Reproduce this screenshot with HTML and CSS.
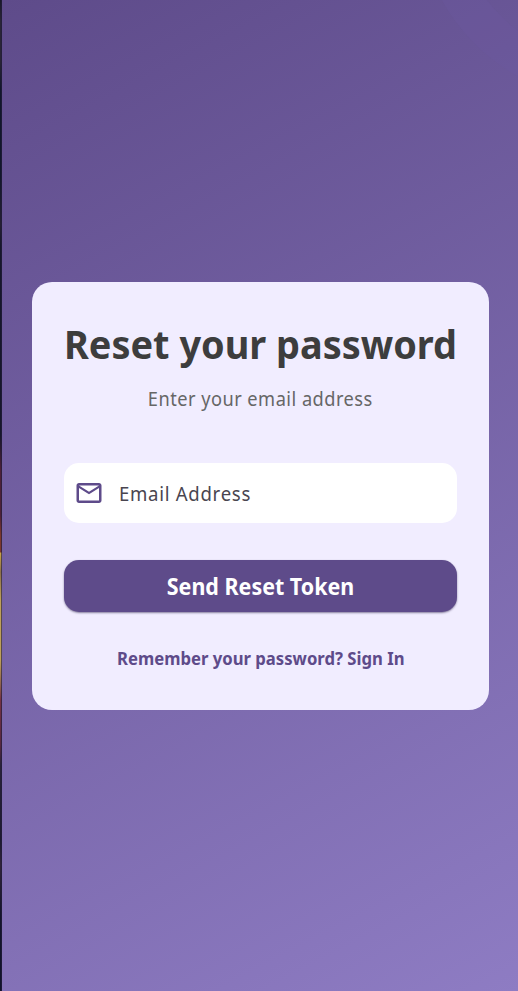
FILE: index.html
```html
<!DOCTYPE html>
<html lang="en">
<head>
<meta charset="utf-8">
<title>Reset your password</title>
<link rel="stylesheet" href="styles.css">
</head>
<body>
<div class="edge"></div>
<main class="page">
  <div class="ring"></div>
  <form class="card">
    <h1 class="title"><span>Reset your password</span></h1>
    <p class="subtitle"><span>Enter your email address</span></p>
    <div class="field">
      <svg class="mail" viewBox="0 0 24 24" aria-hidden="true"><path d="M22 6c0-1.1-.9-2-2-2H4c-1.1 0-2 .9-2 2v12c0 1.100.9 2 2 2h16c1.100 0 2-.9 2-2V6zm-2 0l-8 5-8-5h16zm0 12H4V8l8 5 8-5v10z"/></svg>
      <span class="label">Email Address</span>
    </div>
    <button class="submit" type="button"><span>Send Reset Token</span></button>
    <a class="signin"><span>Remember your password? Sign In</span></a>
  </form>
</main>
</body>
</html>
```
FILE: styles.css
```css
* { box-sizing: border-box; }
body {
  margin: 0;
  height: 991px;
  display: flex;
  overflow: hidden;
  font-family: "Noto Sans", "Open Sans", sans-serif;
}
.edge {
  width: 2px;
  flex: none;
  background: linear-gradient(90deg, transparent 50%, rgba(35, 28, 60, .65) 50%),
    linear-gradient(#181828 0, #292536 20px, #292536 60px, #11172b 90px, #11172b 175px, #252033 225px, #16172b 245px, #16172b 435px, #4c2138 470px, #4c2138 515px, #7b382c 535px, #7b382c 552px, #c9a346 553px, #8c704b 572px, #bd9f59 600px, #bd9f59 660px, #8d604c 685px, #743244 700px, #562940 745px, #292339 765px, #1c1a30 840px, #30243a 865px, #14152b 915px, #11142b 991px);
}
.page {
  position: relative;
  flex: 1;
  display: flex;
  align-items: center;
  justify-content: center;
  overflow: hidden;
  background: linear-gradient(152.5deg, #5e4b8a, #8e7cc3);
}
.ring {
  position: absolute;
  top: -298px;
  right: -298px;
  width: 400px;
  height: 400px;
  border: 38px solid rgba(112, 92, 166, .2);
  border-radius: 50%;
}
.card {
  position: relative;
  width: 457px;
  height: 428px;
  left: .5px;
  padding: 35px 32px 0;
  border-radius: 20px;
  background: #f1edff;
  display: flex;
  flex-direction: column;
}
.title, .subtitle, .signin {
  margin: 0;
  display: flex;
  justify-content: center;
  white-space: nowrap;
}
.title span, .subtitle span, .submit span, .signin span { display: block; }
.title { height: 54px; font-size: 40px; line-height: 54px; font-weight: 700; color: #3d3d3d; }
.title span { transform: scaleX(.947); }
.subtitle { height: 28px; margin-top: 14px; font-size: 19.5px; line-height: 28px; letter-spacing: .5px; color: #666; }
.subtitle span { transform: scaleX(.935); }
.field {
  height: 60px;
  margin-top: 50px;
  padding-left: 10px;
  border-radius: 15px;
  background: #fff;
  display: flex;
  align-items: center;
}
.mail { width: 30px; height: 30px; flex: none; fill: #5e4b8a; }
.label { margin: 2px 0 0 15px; font-size: 19.5px; line-height: 28px; letter-spacing: .75px; color: #49454f; white-space: nowrap; transform: scaleX(.952); transform-origin: left; }
.submit {
  height: 52px;
  margin-top: 37.500px;
  padding: 0;
  border: 0;
  border-radius: 15px;
  background: #5e4b8a;
  box-shadow: 0 1px 2px rgba(30, 20, 60, .5);
  color: #fff;
  font: 700 23px/51px "Noto Sans", sans-serif;
}
.submit span { transform: scaleX(.933); }
.signin { margin-top: 32.500px; font-size: 17.5px; line-height: 26px; font-weight: 700; color: #5e4b8a; }
.signin span { transform: scaleX(.953); }
```
